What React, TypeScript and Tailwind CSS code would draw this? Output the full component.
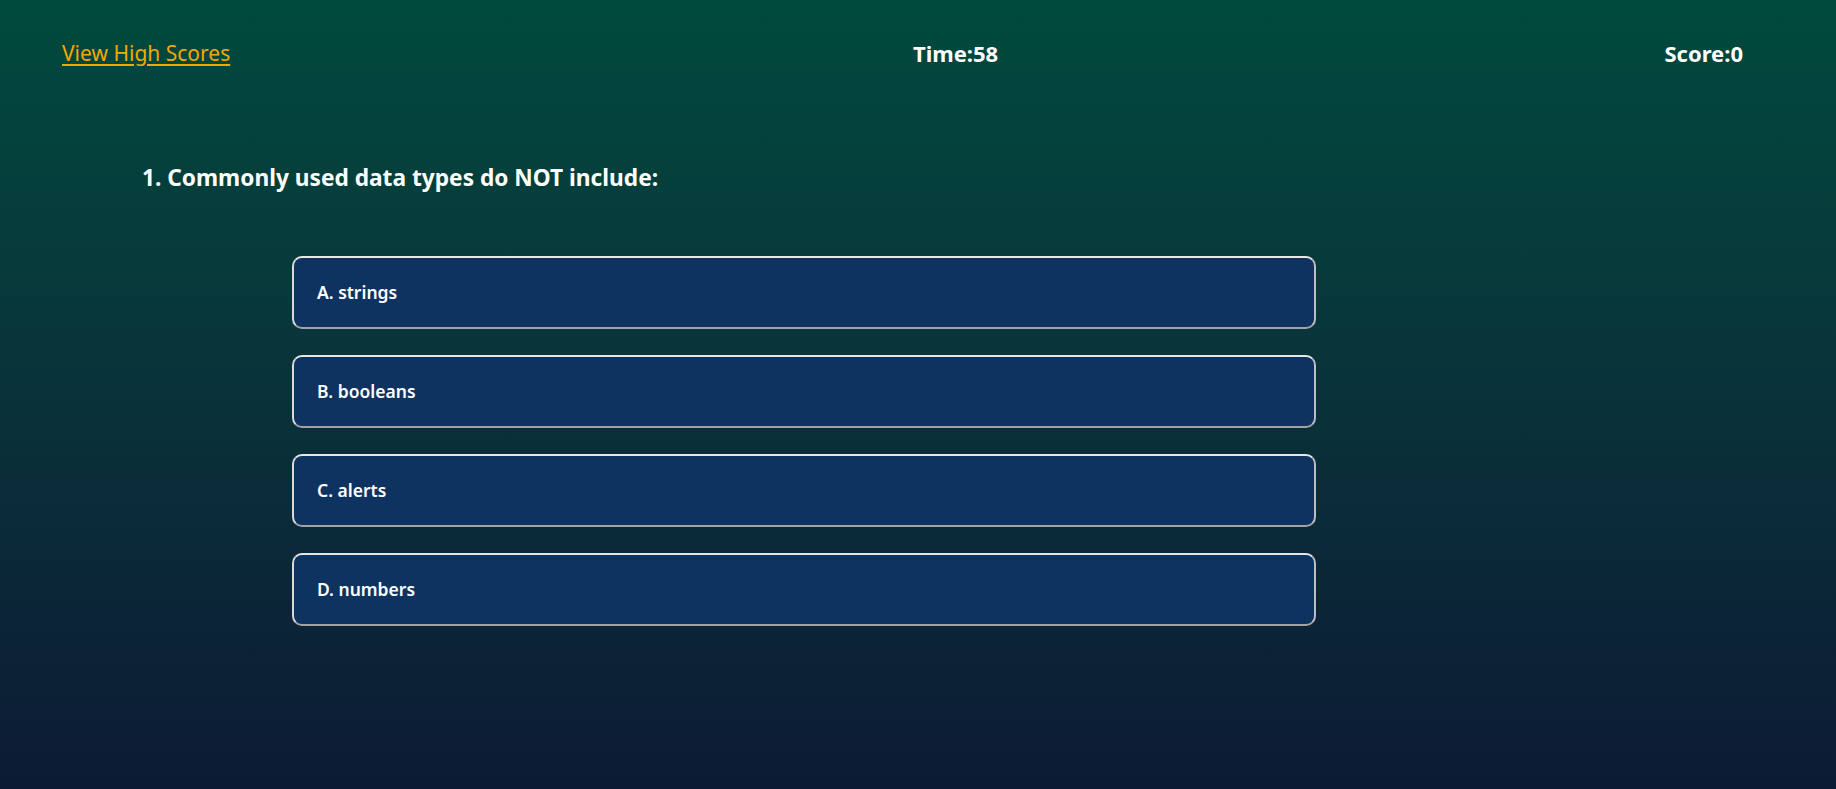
import React from "react";

const answers = ["A. strings", "B. booleans", "C. alerts", "D. numbers"];

export default function App() {
  return (
    <div
      className="min-h-screen h-[789px] w-full bg-gradient-to-b from-[#004a3d] to-[#0c1a34] text-white"
      style={{ fontFamily: "'Noto Sans', 'DejaVu Sans', sans-serif" }}
    >
      <header className="flex items-center pl-[62px] pr-[93px] pt-[38px]">
        <div className="w-[851px] shrink-0">
          <a href="#" className="text-[21px] text-[#f5a800] underline underline-offset-[3px] decoration-[1.5px] leading-[30px]">
            View High Scores
          </a>
        </div>
        <div className="text-[22px] font-bold leading-[30px]">Time:58</div>
        <div className="ml-auto text-[22px] font-bold leading-[30px]">Score:0</div>
      </header>
      <main className="pl-[142px] pt-[95px]">
        <h2 className="text-[22.7px] font-bold leading-[30px]">1. Commonly used data types do NOT include:</h2>
        <div className="mt-[63px] ml-[150px] flex w-[1024px] flex-col gap-[26px]">
          {answers.map((a) => (
            <button
              key={a}
              className="flex h-[73px] items-center rounded-[10px] border-2 border-t-[#e6e6e6] border-l-[#d9d9d9] border-r-[#bdbdbd] border-b-[#a3a3a3] bg-[#0f3360] pl-[23px] text-left text-[17.5px] font-semibold"
            >
              {a}
            </button>
          ))}
        </div>
      </main>
    </div>
  );
}
